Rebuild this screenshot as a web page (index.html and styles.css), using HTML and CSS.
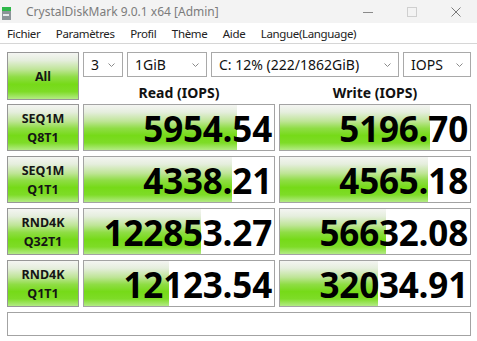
FILE: index.html
```html
<!DOCTYPE html>
<html lang="fr">
<head>
    <meta charset="UTF-8">
    <title>CrystalDiskMark 9.0.1 x64 [Admin]</title>
    <link rel="stylesheet" href="styles.css">
</head>
<body>
    <div class="window">
        <div class="titlebar">
            <svg class="app-icon" width="10" height="16" viewBox="0 0 10 16">
                <rect x="0" y="3" width="9" height="4" fill="#2fb84a"/>
                <rect x="0" y="7" width="9" height="9" fill="#8c9499"/>
                <rect x="1" y="10" width="6" height="2" fill="#e6e9eb"/>
            </svg>
            <span class="title">CrystalDiskMark 9.0.1 x64 [Admin]</span>
            <div class="win-controls">
                <svg width="10" height="10" viewBox="0 0 10 10"><line x1="0" y1="5.5" x2="10" y2="5.5" stroke="#8a8a8a" stroke-width="1"/></svg>
                <svg width="10" height="10" viewBox="0 0 10 10"><rect x="0.5" y="0.5" width="9" height="9" fill="none" stroke="#cfcfcf" stroke-width="1"/></svg>
                <svg width="10" height="10" viewBox="0 0 10 10"><path d="M0.5 0.5 L9.5 9.5 M9.5 0.5 L0.5 9.5" stroke="#7a7a7a" stroke-width="1"/></svg>
            </div>
        </div>

        <div class="menubar">
            <span>Fichier</span>
            <span>Paramètres</span>
            <span>Profil</span>
            <span>Thème</span>
            <span>Aide</span>
            <span>Langue(Language)</span>
        </div>

        <div class="main">
            <div class="top">
                <div class="btn btn-all">All</div>
                <div class="top-right">
                    <div class="selects">
                        <div class="select sel-count">3<svg class="chev" width="7" height="4" viewBox="0 0 7 4"><path d="M0.5 0.5 L3.5 3.5 L6.5 0.5" fill="none" stroke="#8a8a8a"/></svg></div>
                        <div class="select sel-size">1GiB<svg class="chev" width="7" height="4" viewBox="0 0 7 4"><path d="M0.5 0.5 L3.5 3.5 L6.5 0.5" fill="none" stroke="#8a8a8a"/></svg></div>
                        <div class="select sel-drive">C: 12% (222/1862GiB)<svg class="chev" width="7" height="4" viewBox="0 0 7 4"><path d="M0.5 0.5 L3.5 3.5 L6.5 0.5" fill="none" stroke="#8a8a8a"/></svg></div>
                        <div class="select sel-unit">IOPS<svg class="chev" width="7" height="4" viewBox="0 0 7 4"><path d="M0.5 0.5 L3.5 3.5 L6.5 0.5" fill="none" stroke="#8a8a8a"/></svg></div>
                    </div>
                    <div class="heads">
                        <div class="head">Read (IOPS)</div>
                        <div class="head">Write (IOPS)</div>
                    </div>
                </div>
            </div>

            <div class="rows">
                <div class="btn label">SEQ1M<br>Q8T1</div>
                <div class="meter"><div class="bar" style="width: 80.5%"></div><span class="value">5954.54</span></div>
                <div class="meter"><div class="bar" style="width: 78.9%"></div><span class="value">5196.70</span></div>

                <div class="btn label">SEQ1M<br>Q1T1</div>
                <div class="meter"><div class="bar" style="width: 77.9%"></div><span class="value">4338.21</span></div>
                <div class="meter"><div class="bar" style="width: 77.9%"></div><span class="value">4565.18</span></div>

                <div class="btn label">RND4K<br>Q32T1</div>
                <div class="meter"><div class="bar" style="width: 61.6%"></div><span class="value">122853.27</span></div>
                <div class="meter"><div class="bar" style="width: 55.8%"></div><span class="value">56632.08</span></div>

                <div class="btn label">RND4K<br>Q1T1</div>
                <div class="meter"><div class="bar" style="width: 44.7%"></div><span class="value">12123.54</span></div>
                <div class="meter"><div class="bar" style="width: 51.6%"></div><span class="value">32034.91</span></div>
            </div>

            <div class="status"></div>
        </div>
    </div>
</body>
</html>
```

FILE: styles.css
```css
body {
    margin: 0;
    background: #fff;
    font-family: "Noto Sans", "Open Sans", sans-serif;
    color: #1a1a1a;
}

.window {
    width: 477px;
    height: 341px;
    overflow: hidden;
}

/* title bar */
.titlebar {
    height: 23px;
    display: flex;
    align-items: center;
    background: #f3f3f3;
}

.app-icon {
    margin: 0 14px 0 2px;
}

.title {
    font-size: 12px;
    color: #7c7c7c;
    flex: 1;
}

.win-controls {
    display: flex;
    align-items: center;
    gap: 34px;
    padding-right: 16px;
}

/* menu */
.menubar {
    height: 20px;
    display: flex;
    align-items: center;
    gap: 15.5px;
    padding-left: 7px;
    font-size: 11.5px;
    letter-spacing: -0.35px;
    color: #222;
    border-bottom: 1px solid #d6d6d6;
}

/* main area */
.main {
    padding: 8px 6px 0 7px;
}

.btn {
    box-sizing: border-box;
    border: 1px solid #979797;
    background: linear-gradient(to bottom, #f4f5f2 0%, #e5eedd 16%, #bfe597 36%, #8fdd45 52%, #76da18 68%, #7edc27 84%, #b3eb85 100%);
    display: flex;
    align-items: center;
    justify-content: center;
    text-align: center;
    font-weight: bold;
    color: #151515;
}

.top {
    display: flex;
    height: 52px;
}

.btn-all {
    width: 72px;
    height: 48px;
    font-size: 12.5px;
}

.top-right {
    margin-left: 4px;
    width: 388px;
}

.selects {
    display: flex;
    gap: 4px;
    height: 25px;
}

.select {
    box-sizing: border-box;
    border: 1px solid #a9a9a9;
    background: #fff;
    display: flex;
    align-items: center;
    justify-content: space-between;
    padding: 0 7px 0 7px;
    font-size: 14px;
    color: #111;
}

.sel-count { width: 40px; }
.sel-size { width: 80px; }
.sel-drive { width: 188px; }
.sel-unit { width: 68px; }

.heads {
    display: flex;
    gap: 4px;
    padding-top: 6px;
}

.head {
    width: 192px;
    text-align: center;
    font-weight: bold;
    font-size: 14px;
    line-height: 20px;
    color: #111;
}

/* result rows */
.rows {
    display: grid;
    grid-template-columns: 72px 192px 192px;
    grid-auto-rows: 47px;
    column-gap: 4px;
    row-gap: 5px;
}

.label {
    font-size: 12.5px;
    line-height: 19px;
}

.meter {
    position: relative;
    box-sizing: border-box;
    border: 1px solid #a3a3a3;
    background: #fff;
    overflow: hidden;
}

.bar {
    position: absolute;
    left: 0;
    top: 0;
    bottom: 0;
    background: linear-gradient(to bottom, #f4f5f2 0%, #e5eedd 16%, #bfe597 36%, #8fdd45 52%, #76da18 68%, #7edc27 84%, #b3eb85 100%);
}

.value {
    position: relative;
    display: block;
    text-align: right;
    padding-right: 2px;
    font-family: "Open Sans", "Noto Sans", sans-serif;
    font-weight: bold;
    font-size: 35px;
    line-height: 47px;
    color: #000;
    letter-spacing: -0.2px;
}

.status {
    box-sizing: border-box;
    margin-top: 5px;
    height: 24px;
    width: 464px;
    border: 1px solid #a3a3a3;
}
```
